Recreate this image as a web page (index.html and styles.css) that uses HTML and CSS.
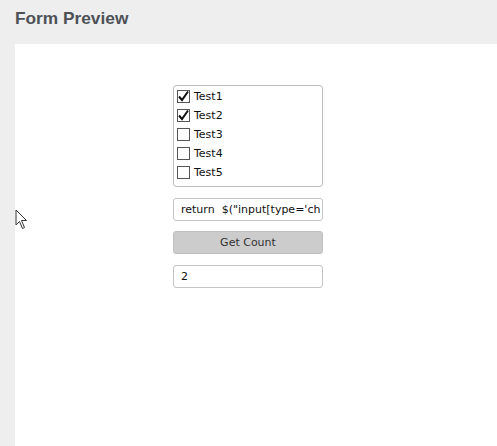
FILE: index.html
```html
<!DOCTYPE html>
<html lang="en">
<head>
    <meta charset="UTF-8">
    <title>Form Preview</title>
    <link rel="stylesheet" href="styles.css">
</head>
<body>
    <h2 class="title">Form Preview</h2>

    <div class="panel">
        <div class="form">
            <div class="checklist">
                <label class="item">
                    <span class="box"><svg viewBox="0 0 13 13" width="13" height="13"><path d="M2 6.5 L5 10 L11 1.5" fill="none" stroke="#111" stroke-width="2"/></svg></span>
                    Test1
                </label>
                <label class="item">
                    <span class="box"><svg viewBox="0 0 13 13" width="13" height="13"><path d="M2 6.5 L5 10 L11 1.5" fill="none" stroke="#111" stroke-width="2"/></svg></span>
                    Test2
                </label>
                <label class="item"><span class="box"></span>Test3</label>
                <label class="item"><span class="box"></span>Test4</label>
                <label class="item"><span class="box"></span>Test5</label>
            </div>

            <div class="field">return&nbsp; $("input[type='ch</div>
            <button class="btn">Get Count</button>
            <div class="field">2</div>
        </div>
    </div>

    <!-- mouse pointer -->
    <svg class="pointer" width="14" height="21" viewBox="0 0 14 21">
        <path d="M1 1 L1 16 L4.5 12.5 L7.5 19.5 L9.5 18.5 L6.5 11.5 L11.5 11.5 Z" fill="#fff" stroke="#333" stroke-width="1"/>
    </svg>
</body>
</html>
```

FILE: styles.css
```css
* {
    box-sizing: border-box;
}

body {
    margin: 0;
    height: 446px;
    overflow: hidden;
    background: #eeeeee;
    font-family: 'DejaVu Sans', Verdana, sans-serif;
    font-size: 11px;
    color: #111;
    display: flex;
    flex-direction: column;
}

.title {
    margin: 0;
    padding: 8px 15px 0 15px;
    height: 44px;
    font-family: 'Liberation Sans', Arial, sans-serif;
    font-size: 17.3px;
    font-weight: bold;
    color: #4d5156;
}

.panel {
    flex: 1;
    margin-left: 15px;
    background: #fff;
    padding: 41px 0 0 158px;
}

.form {
    width: 150px;
    display: flex;
    flex-direction: column;
}

.checklist {
    border: 1px solid #bdbdbd;
    border-radius: 3px;
    padding: 1px 3px 4px 3px;
}

.item {
    height: 19px;
    display: flex;
    align-items: center;
    gap: 4px;
}

.box {
    width: 13px;
    height: 13px;
    border: 1px solid #555;
    background: #fff;
    position: relative;
}

.box svg {
    position: absolute;
    left: -1px;
    top: -1px;
}

.field {
    margin-top: 11px;
    height: 23px;
    border: 1px solid #c4c4c4;
    border-radius: 3px;
    padding: 0 7px;
    line-height: 21px;
    white-space: nowrap;
    overflow: hidden;
}

.btn {
    margin-top: 10px;
    height: 23px;
    border: 1px solid #c0c0c0;
    border-radius: 3px;
    background: #cccccc;
    font-family: 'DejaVu Sans', Verdana, sans-serif;
    font-size: 11px;
    color: #333;
    padding: 0;
}

.btn + .field {
    margin-top: 11px;
}

.pointer {
    position: absolute;
    left: 15px;
    top: 209px;
}
```
